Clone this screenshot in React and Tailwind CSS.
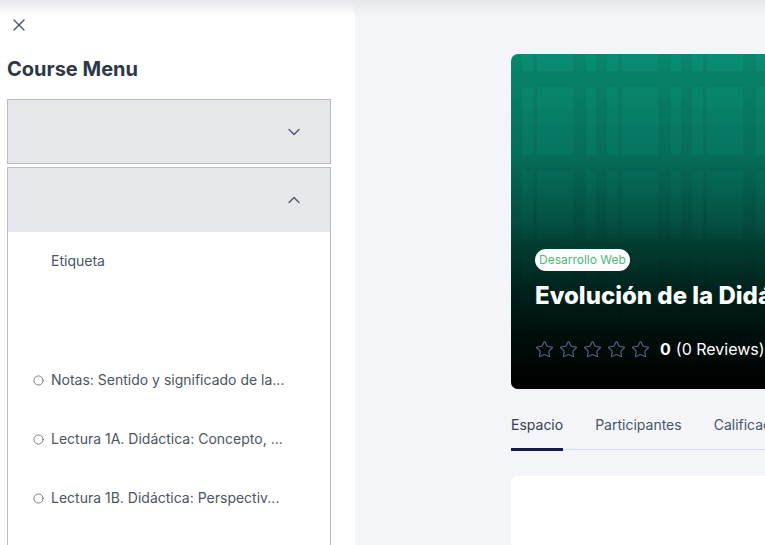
import React from 'react';
import { X, ChevronDown, ChevronUp, Circle, Star } from 'lucide-react';

const lessons = [
  'Notas: Sentido y significado de la...',
  'Lectura 1A. Didáctica: Concepto, ...',
  'Lectura 1B. Didáctica: Perspectiv...',
];

const App = () => {
  return (
    <div className="relative flex h-[545px] w-[765px] overflow-hidden bg-[#f4f5f8] font-['Inter',sans-serif]">
      {/* top shade */}
      <div className="pointer-events-none absolute left-0 right-0 top-0 h-[16px] bg-gradient-to-b from-[#e6e7ea] to-transparent z-10"></div>

      {/* Sidebar */}
      <aside className="h-full w-[355px] shrink-0 bg-white pl-[7px] pr-[24px]">
        <button className="ml-[2px] mt-[15px] flex h-[20px] w-[20px] items-center justify-center text-[#4a5568]">
          <X size={20} strokeWidth={1.6} />
        </button>
        <h2 className="mt-[20px] text-[20px] font-bold leading-[28px] text-[#2d3748]">Course Menu</h2>

        <div className="mt-[16px] flex h-[65px] items-center justify-end border border-[#b9bbc3] bg-[#e5e7eb] pr-[26px]">
          <ChevronDown size={20} strokeWidth={1.6} className="text-[#4a5568]" />
        </div>

        <div className="mt-[3px] h-[400px] border border-[#b9bbc3]">
          <div className="flex h-[64px] items-center justify-end bg-[#e5e7eb] pr-[26px]">
            <ChevronUp size={20} strokeWidth={1.6} className="text-[#4a5568]" />
          </div>
          <div className="pl-[43px] pt-[19px] text-[14px] leading-[20px] text-[#4a5568]">Etiqueta</div>
          <ul className="mt-[99px] flex flex-col gap-[39px] pl-[25px]">
            {lessons.map((l) => (
              <li key={l} className="flex items-center gap-[7px] text-[14px] leading-[20px] text-[#4b5563]">
                <Circle size={11} strokeWidth={1.6} className="shrink-0 text-[#4b5563]" />
                <span className="whitespace-nowrap">{l}</span>
              </li>
            ))}
          </ul>
        </div>
      </aside>

      {/* Main */}
      <main className="flex-1 pl-[156px] pt-[54px]">
        <div className="relative h-[335px] w-[600px] overflow-hidden rounded-[7px] bg-[linear-gradient(to_bottom,#0a8f74_0%,#077460_30%,#04493b_55%,#012a22_72%,#000000_100%)]">
          <div className="absolute inset-0 opacity-[0.06] bg-[repeating-linear-gradient(90deg,#000_0px,#000_11px,transparent_11px,transparent_22px,#000_22px,#000_26px,transparent_26px,transparent_62px,#000_62px,#000_75px,transparent_75px,transparent_85px),repeating-linear-gradient(0deg,transparent_0px,transparent_50px,#000_50px,#000_66px,transparent_66px,transparent_84px)]"></div>
          <div className="absolute inset-0 bg-gradient-to-b from-transparent via-transparent to-black/50"></div>
          <div className="relative flex h-full flex-col justify-end pb-[28px] pl-[24px]">
            <span className="w-fit rounded-full bg-white px-[4px] py-[3px] text-[12px] leading-[16px] text-[#48bb78]">Desarrollo Web</span>
            <h1 className="mt-[9px] whitespace-nowrap text-[24px] font-extrabold leading-[32px] text-white">
              Evolución de la Didáctica
            </h1>
            <div className="mt-[25px] flex items-center">
              <div className="flex gap-[5px]">
                {[0, 1, 2, 3, 4].map((i) => (
                  <Star key={i} size={19} strokeWidth={1.4} className="text-[#55668a]" />
                ))}
              </div>
              <span className="ml-[10px] text-[16px] font-bold text-white">0</span>
              <span className="ml-[5px] text-[16px] text-white">(0 Reviews)</span>
            </div>
          </div>
        </div>

        <div className="mt-[26px] flex w-[600px] gap-[32px] border-b border-[#d5dcea] text-[14px] leading-[20px]">
          <div className="relative pb-[14px] text-[#334155]">
            Espacio
            <div className="absolute -bottom-[2px] left-0 right-0 h-[3px] bg-[#161b4a]"></div>
          </div>
          <div className="pb-[14px] text-[#475569]">Participantes</div>
          <div className="pb-[14px] text-[#475569]">Calificaciones</div>
        </div>

        <div className="mt-[26px] h-[120px] w-[600px] rounded-[6px] bg-white"></div>
      </main>
    </div>
  );
};

export default App;
